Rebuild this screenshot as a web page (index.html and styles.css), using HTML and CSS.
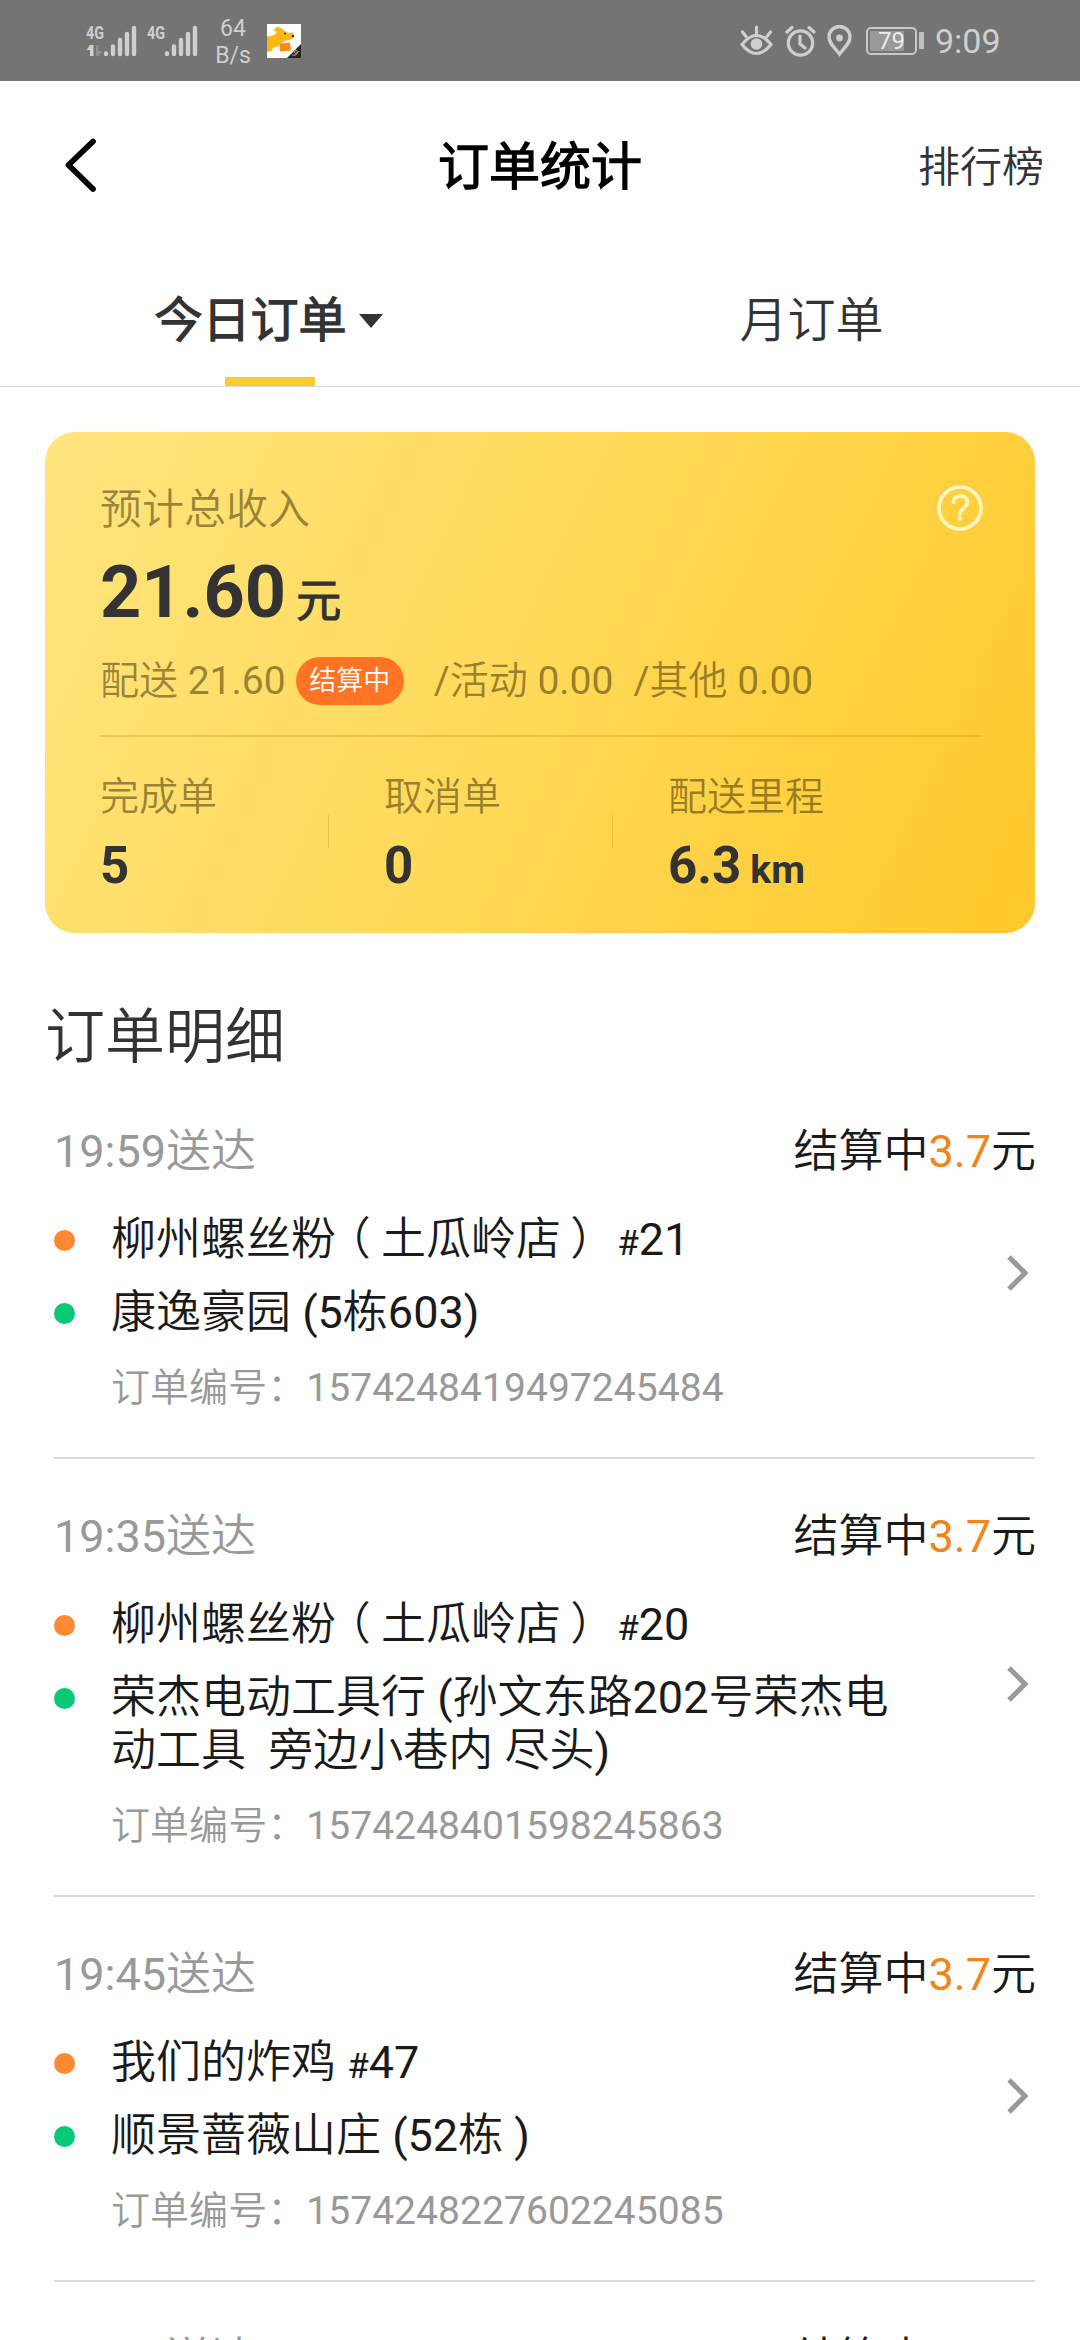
FILE: index.html
```html
<!DOCTYPE html>
<html lang="zh-CN">
<head>
<meta charset="utf-8">
<title>订单统计</title>
<link rel="stylesheet" href="styles.css">
</head>
<body>
<div class="status">
  <svg class="signals" width="112" height="40" viewBox="86 20 112 40">
    <g fill="#cfcfcf" font-family="Roboto, sans-serif" font-size="18" font-weight="700">
      <text x="86" y="38" textLength="18" lengthAdjust="spacingAndGlyphs">4G</text>
      <text x="147" y="38" textLength="18" lengthAdjust="spacingAndGlyphs">4G</text>
      <path d="M90 44h3.500v11H90v-6h-3.500z"/>
      <path d="M96 44h2.500v5.500l4 1-4.500 4.500h-2z" opacity=".3"/>
    </g>
    <g stroke="#cfcfcf" stroke-width="4.400" stroke-linecap="round">
      <path d="M106 52.500v.4M113 45.500v7.500M120 39v14M127 33v20M134 27v26"/>
      <path d="M167 52.500v.4M174 45.500v7.500M181 39v14M188 33v20M195 27v26"/>
    </g>
  </svg>
  <div class="speed"><span>64</span><span>B/s</span></div>
  <svg class="app" width="34" height="34" viewBox="0 0 34 34">
    <rect width="34" height="34" fill="#fff"/>
    <path fill="#fbb614" d="M0 12c4 1 8-1 10-4 0-3 2-5 5-3 3 2 5 4 8 4 2-1 3-1 3 1l1 3c-1 2-5 3-9 4-3 1-5 3-6 5l-3 1c-3 0-4 2-4 4l-5 1z"/>
    <path fill="#fbb614" d="M7 7c1-5 6-5 9-1l-2 3z"/>
    <path fill="#ff8a12" d="M13 19.500l10-1 1 8-11 1z"/>
    <circle cx="18" cy="9.500" r=".9" fill="#222"/><circle cx="26" cy="12" r="1.200" fill="#222"/>
    <path fill="#252525" d="M34 20v14H20z"/>
    <path d="M25 31c5 1 6-2 5-4s-4 1-2 2 4-2 4-2" fill="none" stroke="#c9b878" stroke-width="1"/>
  </svg>
  <div class="status-right">
    <svg width="33" height="32" viewBox="0 0 33 32" fill="none" stroke="#cfcfcf" stroke-width="3.200" stroke-linecap="round">
      <path d="M2 19.500Q16.500 1.500 31 19.500Q16.500 37.500 2 19.500zM16.500 2v6M2.500 7l3.500 4.500M30.500 7L27 11.500"/>
      <circle cx="16.500" cy="19" r="5.800" fill="#cfcfcf" stroke="none"/>
    </svg>
    <svg class="alarm" width="31" height="32" viewBox="0 0 31 32" fill="none" stroke="#cfcfcf" stroke-width="3.200" stroke-linecap="round">
      <circle cx="15.500" cy="18" r="12.200"/><path d="M15 11v8l5 4M2 7l5-4.500M29 7l-5-4.500"/>
    </svg>
    <svg class="pin" width="25" height="32" viewBox="0 0 25 32" fill="none" stroke="#cfcfcf" stroke-width="3.400">
      <path d="M12.500 29C7 22 2 18 2 12a10.500 10.500 0 0 1 21 0c0 6-5 10-10.500 17z"/>
      <circle cx="12.500" cy="13" r="3.400" fill="#cfcfcf" stroke="none"/>
    </svg>
    <div class="battery">
      <div class="level"></div><span class="percent">79</span>
    </div>
    <div class="nub"></div>
    <span class="clock">9:09</span>
  </div>
</div>

<header class="header">
  <svg class="back" width="36" height="56" viewBox="0 0 36 56"><path d="M31 3.500L6.500 27l24.500 24" fill="none" stroke="#000" stroke-width="5.800" stroke-linecap="round" stroke-linejoin="round"/></svg>
  <h1 class="title">订单统计</h1>
  <span class="rank">排行榜</span>
</header>

<nav class="tabs">
  <div class="tab tab-active"><span>今日订单</span><i class="caret"></i></div>
  <div class="tab"><span>月订单</span></div>
</nav>

<section class="card">
  <div class="card-head">
    <span>预计总收入</span>
    <svg class="help" width="46" height="46" viewBox="0 0 46 46" fill="none" stroke="#fff8c4" stroke-width="3.600" stroke-linecap="round"><circle cx="23" cy="23" r="21"/><path d="M16.500 17.500c0-9 14.500-8.500 14 0-.3 5-7.500 6-7.500 11.500"/><path d="M23 33.300v.4" stroke-width="4"/></svg>
  </div>
  <div class="amount">21.60<span class="yuan">元</span></div>
  <div class="detail"><span>配送 21.60</span><span class="badge">结算中</span><span class="activity">/活动 0.00</span><span>/其他 0.00</span></div>
  <div class="stats">
    <div class="stat"><div class="stat-label">完成单</div><div class="stat-value">5</div></div>
    <div class="stat"><div class="stat-label">取消单</div><div class="stat-value">0</div></div>
    <div class="stat"><div class="stat-label">配送里程</div><div class="stat-value">6.3<span class="km">km</span></div></div>
  </div>
</section>

<h2 class="section">订单明细</h2>

<main class="orders">
  <article class="order">
    <div class="top"><span class="time">19:59送达</span><span>结算中<b class="fee">3.7</b>元</span></div>
    <div class="place shop">柳州螺丝粉<i class="paren">（</i>土瓜岭店<i class="paren close">）</i> <small class="hash">#</small>21</div>
    <div class="place dest">康逸豪园 (5栋603)</div>
    <div class="number">订单编号：1574248419497245484</div>
    <svg class="go" width="24" height="38" viewBox="0 0 24 38"><path d="M3 3l16 16L3 35"/></svg>
  </article>
  <article class="order">
    <div class="top"><span class="time">19:35送达</span><span>结算中<b class="fee">3.7</b>元</span></div>
    <div class="place shop">柳州螺丝粉<i class="paren">（</i>土瓜岭店<i class="paren close">）</i> <small class="hash">#</small>20</div>
    <div class="place dest">荣杰电动工具行 (孙文东路202号荣杰电<br>动工具&nbsp; 旁边小巷内 尽头)</div>
    <div class="number">订单编号：1574248401598245863</div>
    <svg class="go" width="24" height="38" viewBox="0 0 24 38"><path d="M3 3l16 16L3 35"/></svg>
  </article>
  <article class="order">
    <div class="top"><span class="time">19:45送达</span><span>结算中<b class="fee">3.7</b>元</span></div>
    <div class="place shop">我们的炸鸡 <small class="hash">#</small>47</div>
    <div class="place dest">顺景蔷薇山庄 (52栋 )</div>
    <div class="number">订单编号：1574248227602245085</div>
    <svg class="go" width="24" height="38" viewBox="0 0 24 38"><path d="M3 3l16 16L3 35"/></svg>
  </article>
  <article class="order">
    <div class="top"><span class="time">19:30送达</span><span>结算中<b class="fee">3.7</b>元</span></div>
  </article>
</main>
</body>
</html>
```
FILE: styles.css
```css
* { box-sizing: border-box; }
html, body { margin: 0; height: 2340px; overflow: hidden; }
body {
  width: 1080px;
  background: #fefefe;
  color: #1a1a1a;
  font-family: Roboto, "Noto Sans CJK SC DemiLight", "Noto Sans CJK SC", sans-serif;
  display: flex;
  flex-direction: column;
}
svg { display: block; flex: none; }
h1, h2 { margin: 0; }
i { font-style: normal; }

.status { flex: none; height: 81px; background: #747474; display: flex; align-items: center; padding: 0 81px 0 86px; color: #cfcfcf; }
.speed { width: 34px; margin: 2px 17px 0 18px; display: flex; flex-direction: column; align-items: center; font-size: 23px; line-height: 27px; }
.status-right { margin-left: auto; display: flex; align-items: center; }
.alarm { margin-left: 12px; }
.pin { margin-left: 11px; }
.battery { margin-left: 14px; width: 51px; height: 28px; border: 2px solid #c8c8c8; border-radius: 5px; position: relative; }
.level { position: absolute; left: 2px; top: 2px; width: 34px; height: 20px; background: #999; }
.percent { position: absolute; left: 10px; top: -1px; font-size: 24px; line-height: 26px; color: #ececec; }
.nub { margin-left: 2px; width: 5px; height: 17px; border-radius: 1px; background: #c0c0c0; }
.clock { margin-left: 11px; font-size: 34px; line-height: 40px; width: 64px; }

.header { flex: none; height: 171px; padding: 0 36px 0 62px; display: grid; grid-template-columns: 1fr 204px 1fr; align-items: center; }
.back { margin-top: -2px; }
.title { margin: 3px 0 0 -13px; font-size: 51px; line-height: 60px; font-weight: 700; color: #000; white-space: nowrap; }
.rank { font-size: 42px; line-height: 60px; justify-self: end; color: #333; margin-top: 2px; }

.tabs { flex: none; height: 135px; display: flex; border-bottom: 1px solid #d8d8d8; color: #333; font-size: 48px; line-height: 60px; }
.tab { flex: 1; display: flex; flex-direction: column; justify-content: center; align-items: center; position: relative; padding-top: 3px; }
.tab-active { font-weight: 700; flex-direction: row; gap: 12px; padding-right: 6px; }
.tab-active::after { content: ""; position: absolute; left: 225px; bottom: 0; width: 90px; height: 9px; background: #fbcc2f; }
.caret { border: 12px solid transparent; border-width: 14px 12px 0; border-top-color: #333; margin-top: 1px; }

.card {
  flex: none; height: 501px; margin: 45px 45px 0; padding: 53px 54px 0 55px; border-radius: 30px;
  background: linear-gradient(115deg, #ffe57f 0%, #ffd957 50%, #ffc82a 100%);
  color: #333;
}
.card-head { display: flex; justify-content: space-between; align-items: center; height: 50px; font-size: 42px; line-height: 50px; color: rgba(51, 40, 0, .5); }
.help { margin: -4px -2px 0 0; }
.amount { margin-top: 18px; height: 80px; font-size: 72px; line-height: 80px; font-weight: 700; }
.yuan { font-size: 45px; line-height: 1; margin-left: 10px; }
.detail { margin-top: 24px; height: 48px; display: flex; font-size: 39px; line-height: 48px; color: rgba(51, 40, 0, .5); }
.badge { width: 108px; margin-left: 10px; border-radius: 24px; background: #ff7424; color: #fff; font-size: 27px; text-align: center; }
.activity { margin: 0 20px 0 30px; }
.stats { margin-top: 30px; padding-top: 37px; border-top: 2px solid rgba(190, 130, 0, .25); display: flex; }
.stat { width: 284px; position: relative; }
.stat + .stat::before { content: ""; position: absolute; left: -56px; top: 41px; width: 1px; height: 33px; background: rgba(190, 130, 0, .3); }
.stat-label { font-size: 39px; line-height: 46px; color: rgba(51, 40, 0, .5); }
.stat-value { margin-top: 16px; height: 60px; font-size: 51px; line-height: 60px; font-weight: 700; }
.km { font-size: 39px; line-height: 1; margin-left: 9px; }

.section { flex: none; margin: 69px 0 0 45px; font-size: 60px; line-height: 72px; font-weight: 400; color: #333; }
.orders { flex: 1; min-height: 0; overflow: hidden; padding: 0 45px 0 54px; }
.order { position: relative; padding: 51px 0 46px; border-bottom: 2px solid #dadada; font-size: 45px; line-height: 53px; }
.top { display: flex; justify-content: space-between; margin: 0 -1px 35px 0; }
.time { color: #999; }
.fee { font-weight: 400; color: #f08519; }
.place { position: relative; padding-left: 57px; white-space: nowrap; }
.place::before { content: ""; position: absolute; left: 0; top: 17px; width: 21px; height: 21px; border-radius: 50%; background: #ff8833; }
.shop { height: 53px; }
.dest { margin-top: 20px; }
.dest::before { background: #07c976; }
.hash { font-size: 35px; line-height: 1; }
.paren { display: inline-block; width: 45px; padding-left: 2px; text-align: center; line-height: 1; font-feature-settings: "halt"; }
.close { padding: 0 4px 0 0; }
.number { margin-top: 26px; padding-left: 57px; font-size: 39px; line-height: 46px; color: #999; letter-spacing: .05px; }
.go { position: absolute; right: 5px; top: calc(50% - 12px); fill: none; stroke: #999; stroke-width: 5; }
```
